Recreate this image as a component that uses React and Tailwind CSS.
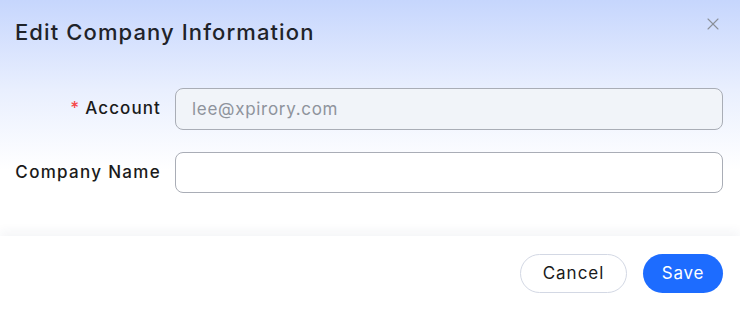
import React, { useState } from 'react';
import { X } from 'lucide-react';

export default function App() {
  const [name, setName] = useState('');

  return (
    <div className="w-[740px] h-[311px] flex flex-col bg-[linear-gradient(180deg,#c6d6fd_0px,#e9effe_90px,#ffffff_170px)] text-[#1f2329] font-['Inter',sans-serif]">
      {/* Header */}
      <div className="flex items-start justify-between pl-[15px] pr-[17px] pt-[17px] h-[88px]">
        <h2 className="text-[22px] font-medium leading-[30px] tracking-[1.1px] text-[#1f2329]">Edit Company Information</h2>
        <button className="mt-[-3px] text-[#8a8f99]">
          <X className="w-[20px] h-[20px]" strokeWidth={1.3} />
        </button>
      </div>

      {/* Form */}
      <div className="flex flex-col gap-[22px] pr-[17px]">
        <div className="flex items-center">
          <label className="w-[175px] pr-[14px] text-right text-[17px] font-medium tracking-[1.1px] text-[#1a1a1a]">
            <span className="text-[#f5484a] mr-[5px]">*</span>Account
          </label>
          <input
            disabled
            value="lee@xpirory.com"
            readOnly
            className="flex-1 h-[42px] rounded-[8px] border border-[#a9adb6] bg-[#f1f4f9] px-[16px] text-[17px] tracking-[0.7px] text-[#8e939c] outline-none"
          />
        </div>
        <div className="flex items-center">
          <label className="w-[175px] pr-[14px] text-right text-[17px] font-medium tracking-[1.3px] text-[#1a1a1a]">Company Name</label>
          <input
            value={name}
            onChange={(e) => setName(e.target.value)}
            className="flex-1 h-[41px] rounded-[8px] border border-[#a9adb6] bg-white px-[16px] text-[17px] outline-none"
          />
        </div>
      </div>

      {/* Footer */}
      <div className="mt-auto h-[75px] bg-white shadow-[0_-5px_10px_rgba(40,50,90,0.05)] flex items-center justify-end gap-[16px] pr-[17px]">
        <button className="h-[39px] w-[107px] rounded-full border border-[#d3d8e4] bg-white text-[17px] tracking-[1px] text-[#1a1a1a]">Cancel</button>
        <button className="h-[39px] w-[80px] rounded-full bg-[#1d6cff] text-[17px] tracking-[0.8px] text-white">Save</button>
      </div>
    </div>
  );
}
